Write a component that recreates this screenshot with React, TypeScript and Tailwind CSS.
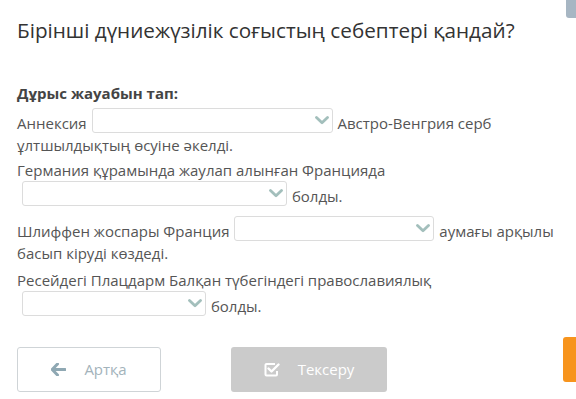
import React from "react";

function Chevron() {
  return (
    <svg width="14" height="9" viewBox="0 0 14 9" className="shrink-0">
      <path d="M1.5 1.5 L7 6.8 L12.5 1.5" fill="none" stroke="#a3bfbc" strokeWidth="2.8" strokeLinecap="round" strokeLinejoin="round" />
    </svg>
  );
}

function Select({ width, lead }: { width: string; lead?: boolean }) {
  return (
    <span
      className={`inline-block h-[25px] overflow-hidden rounded-[3px] border border-[#dcdcdc] bg-white align-[-4px] mr-[1px] ${lead ? "ml-[5px]" : "ml-[1px]"} ${width}`}
    >
      <span className="flex h-full items-center justify-end pr-[3px]">
        <Chevron />
      </span>
    </span>
  );
}

export default function App() {
  return (
    <div className="relative h-[399px] w-[576px] overflow-hidden bg-white font-['Open_Sans',sans-serif] text-[#555]">
      <div className="absolute right-0 top-0 h-[18px] w-[10px] rounded-bl-[3px] bg-[#a7b6c3]" />
      <div className="absolute right-0 top-[337px] h-[45px] w-[13px] rounded-l-[3px] bg-[#f7941d]" />

      <div className="pl-[17px] pr-[14px] pt-[16px]">
        <h1 className="text-[20.7px] leading-[28px] text-[#333]">Бірінші дүниежүзілік соғыстың себептері қандай?</h1>

        <p className="mt-[39px] text-[15px] font-bold leading-[21px] text-[#444]">Дұрыс жауабын тап:</p>

        <div className="mt-[4px] flex flex-col gap-[3px] text-[15px] leading-[22px]">
          <div>
            Аннексия <Select width="w-[241px]" /> Австро-Венгрия серб ұлтшылдықтың өсуіне әкелді.
          </div>
          <div className="pb-[6px]">
            Германия құрамында жаулап алынған Францияда <Select width="w-[265px]" lead /> болды.
          </div>
          <div>
            Шлиффен жоспары Франция <Select width="w-[200px]" /> аумағы арқылы басып кіруді көздеді.
          </div>
          <div className="pt-[2px]">
            Ресейдегі Плацдарм Балқан түбегіндегі православиялық <Select width="w-[184px]" lead /> болды.
          </div>
        </div>

        <div className="mt-[30px] flex gap-[70px]">
          <button className="flex h-[45px] w-[144px] items-center justify-center gap-[18px] rounded-[3px] border border-[#cfd4d7] bg-white text-[15px] text-[#a3b3bb]">
            <svg width="15" height="13" viewBox="0 0 15 13">
              <path d="M6.5 1 L1.2 6.5 L6.5 12 M1.5 6.5 H14" fill="none" stroke="#8fa8b3" strokeWidth="3" strokeLinecap="round" strokeLinejoin="round" />
            </svg>
            <span>Артқа</span>
          </button>
          <button className="flex h-[45px] w-[156px] items-center justify-center gap-[18px] rounded-[3px] bg-[#cbcbcb] text-[15px] text-white">
            <svg width="16" height="15" viewBox="0 0 16 15">
              <path d="M11 2 H2.5 A1 1 0 0 0 1.5 3 V12.5 A1 1 0 0 0 2.5 13.5 H12 A1 1 0 0 0 13 12.5 V9" fill="none" stroke="white" strokeWidth="2" />
              <path d="M4.5 6.5 L7.5 9.5 L14.5 2.5" fill="none" stroke="white" strokeWidth="2.4" strokeLinecap="round" strokeLinejoin="round" />
            </svg>
            <span>Тексеру</span>
          </button>
        </div>
      </div>
    </div>
  );
}
